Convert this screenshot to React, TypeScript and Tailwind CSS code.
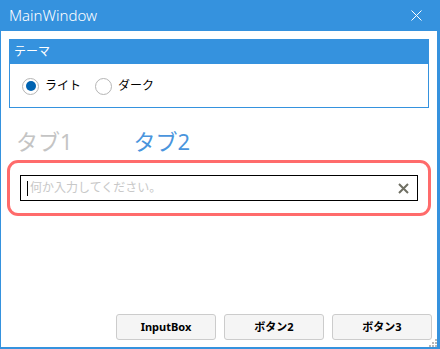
import { ReactNode } from "react";

const jp = "font-['Segoe_UI','Noto_Sans','Noto_Sans_CJK_JP',sans-serif]";

const Radio = ({ checked, label }: { checked?: boolean; label: string }) => {
  return (
    <div className="flex flex-row items-center gap-[6px]">
      <span className="w-[17px] h-[17px] rounded-full border border-[#b5b5b5] bg-white flex items-center justify-center">
        {checked && <span className="w-[10px] h-[10px] rounded-full bg-[#0063b1]"></span>}
      </span>
      <span className="text-[12px] text-black leading-none">{label}</span>
    </div>
  );
};

const Button = ({ children }: { children: ReactNode }) => {
  return (
    <button className="w-[100px] h-[26px] rounded-[3px] border border-[#cccccc] bg-[#f5f5f5] text-[11px] font-bold text-black flex items-center justify-center">
      {children}
    </button>
  );
};

export default function App() {
  return (
    <div className={`w-[440px] h-[349px] bg-[#3592de] flex flex-col ${jp}`}>
      <div className="h-[31px] flex flex-row items-center justify-between pl-[9px] pr-[18px]">
        <span className="text-white text-[15px] font-light">MainWindow</span>
        <svg width="11" height="11" viewBox="0 0 11 11">
          <path d="M0.5 0.5 L10.5 10.5 M10.5 0.5 L0.5 10.5" stroke="white" strokeWidth="1" />
        </svg>
      </div>
      <div className="relative flex-1 bg-white ml-[1px] mr-[3px] mb-[2px] flex flex-col pt-[8px]">
        <div className="mx-[8px] border border-[#3592de] h-[69px] flex flex-col">
          <div className="h-[24px] bg-[#3592de] flex items-center px-[4px]">
            <span className="text-white text-[12px]">テーマ</span>
          </div>
          <div className="flex-1 flex flex-row items-center gap-[14px] pl-[12px] pt-[1px]">
            <Radio checked label="ライト" />
            <Radio label="ダーク" />
          </div>
        </div>
        <div className="flex flex-row mt-[19px] pl-[15px] gap-[61px] text-[22px] leading-[28px]">
          <span className="text-[#c4c4c4]">タブ1</span>
          <span className="text-[#4a95dd]">タブ2</span>
        </div>
        <div className="mx-[6px] mt-[5px] h-[56px] rounded-[11px] border-[3px] border-[#ff6b6b] flex items-center px-[10px]">
          <div className="w-full h-[26px] border border-black flex flex-row items-center pl-[6px] pr-[8px]">
            <span className="w-px h-[15px] bg-black mr-[2px]"></span>
            <span className="flex-1 text-[12px] text-[#c8c8c8]">何か入力してください。</span>
            <svg width="11" height="11" viewBox="0 0 11 11">
              <path d="M1 1 L10 10 M10 1 L1 10" stroke="#6f6f63" strokeWidth="2" />
            </svg>
          </div>
        </div>
        <div className="flex-1"></div>
        <div className="flex flex-row justify-end gap-[8px] pr-[5px] pb-[7px]">
          <Button>InputBox</Button>
          <Button>ボタン2</Button>
          <Button>ボタン3</Button>
        </div>
        <svg className="absolute right-0 bottom-0" width="10" height="10" viewBox="0 0 10 10">
          {[
            [8, 2], [8, 5], [5, 5], [8, 8], [5, 8], [2, 8],
          ].map(([x, y], i) => (
            <rect key={i} x={x} y={y} width="2" height="2" fill="#b8b8b8" />
          ))}
        </svg>
      </div>
    </div>
  );
}
